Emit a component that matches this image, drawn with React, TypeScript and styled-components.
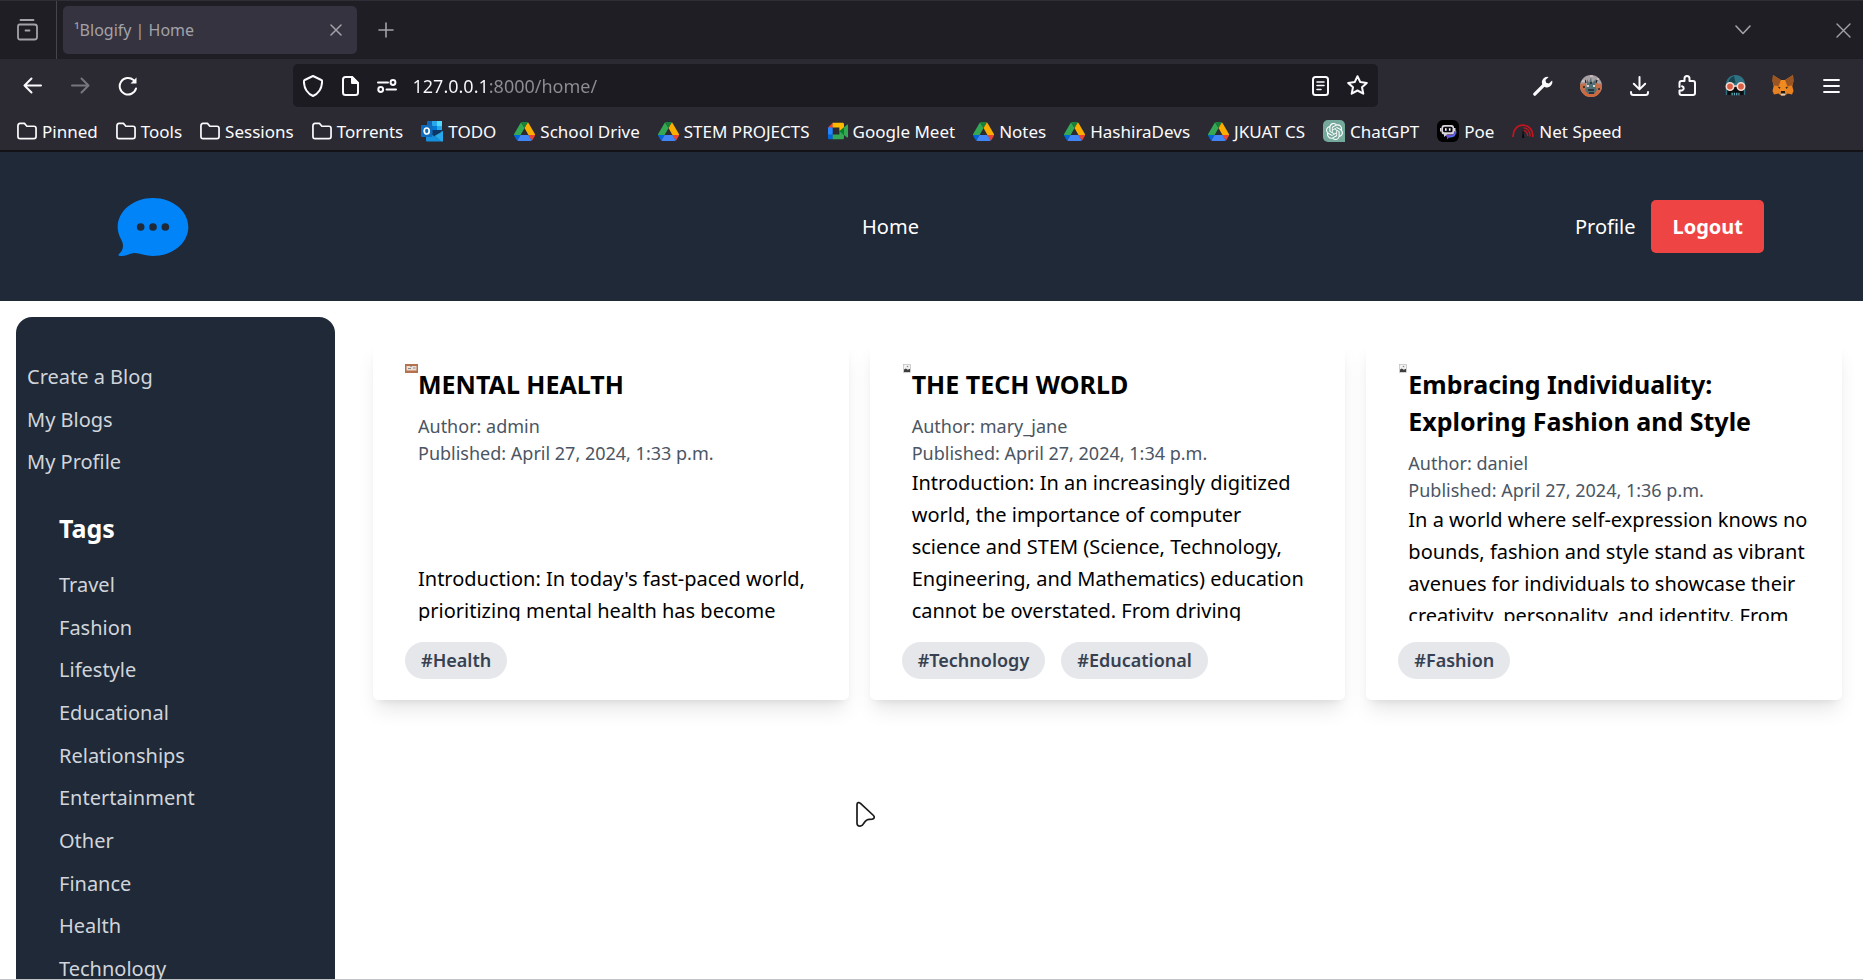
import React from 'react';
import styled, { createGlobalStyle } from 'styled-components';
import { SiOpenai } from 'react-icons/si';

const GlobalStyle = createGlobalStyle`
  *, *::before, *::after { box-sizing: border-box; }
  body {
    margin: 0;
    background: #ffffff;
    color: #000000;
    font-family: "Noto Sans", "Open Sans", sans-serif;
  }
  h2, p, ul { margin: 0; padding: 0; }
  ul { list-style: none; }
  a { color: inherit; text-decoration: none; }
  button { border: 0; padding: 0; margin: 0; background: none; color: inherit; font: inherit; cursor: pointer; }
  svg { display: block; flex: none; }
`;

/* ---------- browser window ---------- */

const Window = styled.div`
  display: flex;
  flex-direction: column;
  height: 100vh;
  overflow: hidden;
  border-bottom: 1px solid #c2c3c7;
`;

const TabStrip = styled.div`
  display: flex;
  align-items: center;
  flex: none;
  height: 59px;
  border-top: 1px solid #2f2e36;
  background: #1f1e25;
  color: #a3a2a8;
`;

const StripButton = styled.button<{ $width: number; $divider?: boolean }>`
  display: flex;
  align-items: center;
  justify-content: center;
  align-self: stretch;
  width: ${p => p.$width}px;
  border-right: ${p => (p.$divider ? '1px solid #46454d' : '0')};
`;

const Tab = styled.div`
  display: flex;
  align-items: center;
  justify-content: space-between;
  width: 294px;
  height: 48px;
  margin: 0 5px 0 6px;
  padding: 0 4px 0 11px;
  border-radius: 5px;
  background: #35333f;
  font-size: 16px;
`;

const Spacer = styled.div`
  flex: 10;
`;

const WindowControls = styled.div`
  display: flex;
  align-self: stretch;
  gap: 60px;
`;

const NavBar = styled.div`
  display: flex;
  align-items: center;
  flex: none;
  padding: 5px 8px;
  background: #2b2a33;
  color: #fbfbfe;
`;

const ToolButton = styled.button`
  display: flex;
  align-items: center;
  justify-content: center;
  width: 48px;
  height: 43px;

  &:disabled { color: #77767d; }
`;

const UrlBar = styled.div`
  display: flex;
  flex: 77;
  align-items: center;
  height: 43px;
  padding: 0 2px;
  border-radius: 5px;
  background: #1c1b22;
`;

const UrlButton = styled.button`
  display: flex;
  align-items: center;
  justify-content: center;
  width: 37px;
  height: 37px;
`;

/* The host part is bright and the rest of the address is dimmed. */
const UrlInput = styled.input`
  flex: 1;
  min-width: 0;
  padding: 0 0 0 7px;
  border: 0;
  outline: 0;
  font: 18px/26px "Noto Sans", sans-serif;
  color: transparent;
  caret-color: #fbfbfe;
  background: linear-gradient(90deg, #fbfbfe 83px, #8f8e94 83px);
  background-clip: text;
  -webkit-background-clip: text;
`;

const BookmarkBar = styled.nav`
  display: flex;
  align-items: center;
  flex: none;
  gap: 18px;
  height: 40px;
  padding: 0 17px;
  border-bottom: 2px solid #121217;
  background: #2b2a33;
  color: #fbfbfe;
  font-size: 17px;
  white-space: nowrap;
`;

const Bookmark = styled.a`
  display: flex;
  align-items: center;
  gap: 5px;
`;

/* ---------- page ---------- */

const SiteHeader = styled.header`
  display: flex;
  align-items: center;
  justify-content: space-between;
  flex: none;
  padding: 21px 99px;
  background: #1f2937;
  color: #ffffff;
  font-size: 20px;
`;

const Account = styled.div`
  display: flex;
  align-items: center;
  gap: 16px;
`;

const Logout = styled.button`
  height: 53px;
  padding: 0 21px;
  border-radius: 5px;
  background: #ef4444;
  font-weight: 700;
`;

const Main = styled.main`
  display: flex;
  align-items: flex-start;
  flex: 1;
  min-height: 0;
  padding: 16px 21px 0 16px;
  gap: 38px;
`;

const Sidebar = styled.aside`
  flex: none;
  width: 319px;
  padding: 44px 11px;
  border-radius: 16px;
  background: #1f2937;
  color: #d1d5db;
  font-size: 20px;
  line-height: 32px;
`;

const LinkList = styled.ul<{ $height: number }>`
  display: flex;
  flex-direction: column;
  justify-content: space-between;
  height: ${p => p.$height}px;
`;

const TagSection = styled.section`
  padding: 32px;
`;

const TagHeading = styled.h2`
  margin-bottom: 22px;
  color: #ffffff;
  font-size: 25px;
  font-weight: 700;
  line-height: 37px;
`;

const Cards = styled.div`
  display: grid;
  flex: 1;
  grid-template-columns: repeat(3, minmax(0, 1fr));
  gap: 21px;
  padding-top: 26px;
`;

const Card = styled.article`
  padding: 21px 21px 21px 32px;
  border-radius: 5px;
  background: #ffffff;
  box-shadow: 0 13px 20px -4px rgba(0, 0, 0, 0.1), 0 5px 8px -5px rgba(0, 0, 0, 0.1);
`;

const Excerpt = styled.div`
  display: flex;
  align-items: flex-start;
  height: 257px;
  overflow: hidden;
`;

const ExcerptText = styled.div`
  padding-top: 2px;
`;

const CardTitle = styled.h2`
  margin-bottom: 10px;
  font-size: 25px;
  font-weight: 700;
  line-height: 37px;
`;

const Meta = styled.p`
  color: #4b5563;
  font-size: 18px;
  line-height: 27px;
`;

const Body = styled.p<{ $blankLines: number }>`
  padding-top: ${p => p.$blankLines * 32}px;
  font-size: 20px;
  line-height: 32px;
  white-space: pre-line;
`;

const Pills = styled.div`
  display: flex;
  gap: 16px;
  margin-top: 21px;
`;

const Pill = styled.a`
  padding: 5px 16px;
  border-radius: 19px;
  background: #e5e7eb;
  color: #374151;
  font-size: 18px;
  font-weight: 600;
  line-height: 27px;
`;

const Pointer = styled.svg`
  position: absolute;
  left: 855px;
  top: 801px;
`;

/* ---------- icons ---------- */

type LineProps = { w: number; h: number; box?: string; stroke?: number; children: React.ReactNode };

const Line = ({ w, h, box, stroke = 2, children }: LineProps) => (
  <svg width={w} height={h} viewBox={box ?? `0 0 ${w} ${h}`} fill="none" stroke="currentColor"
    strokeWidth={stroke} strokeLinecap="round" strokeLinejoin="round" aria-hidden="true">
    {children}
  </svg>
);

const FolderIcon = () => (
  <Line w={20} h={18} box="0 0 21 18" stroke={1.8}>
    <path d="M1 3.500C1 2 1.800 1 3.200 1h4.600l2.600 3h7.400c1.400 0 2.200 1 2.200 2.300v8.400c0 1.400-.8 2.300-2.200 2.300H3.200C1.800 17 1 16 1 14.700z" />
  </Line>
);

const DriveIcon = () => (
  <svg width="21" height="19" viewBox="0 0 87 78" aria-hidden="true">
    <path fill="#0066da" d="M6.600 66.850l3.850 6.650c.8 1.400 1.950 2.500 3.300 3.300L27.500 53H0c0 1.550.4 3.100 1.200 4.500z" />
    <path fill="#34a853" d="M43.650 25L29.900 1.200c-1.350.8-2.500 1.900-3.300 3.300L1.200 48.500A9 9 0 0 0 0 53h27.500z" />
    <path fill="#ea4335" d="M73.550 76.800c1.350-.8 2.500-1.900 3.300-3.300l1.600-2.750L86.100 57.500c.8-1.400 1.200-2.950 1.200-4.500H59.800l5.850 11.500z" />
    <path fill="#188038" d="M43.650 25L57.400 1.200C56.050.4 54.500 0 52.900 0H34.400c-1.600 0-3.150.45-4.500 1.200z" />
    <path fill="#4285f4" d="M59.800 53H27.500L13.750 76.800c1.350.8 2.900 1.200 4.500 1.200h50.800c1.600 0 3.150-.45 4.500-1.200z" />
    <path fill="#fbad00" d="M73.400 26.500L60.700 4.500c-.8-1.400-1.950-2.500-3.300-3.300L43.650 25 59.800 53h27.450c0-1.550-.4-3.100-1.200-4.500z" />
  </svg>
);

const MeetIcon = () => (
  <svg width="20" height="18" viewBox="0 0 87 72" aria-hidden="true">
    <path fill="#00832d" d="M49.500 36l8.500 9.750 11.500 7.300 2-17-2-16.600-11.700 6.450z" />
    <path fill="#0066da" d="M0 51.500V66c0 3.300 2.700 6 6 6h14.500l3-10.950-3-9.550-9.950-3z" />
    <path fill="#e94235" d="M20.500 0L0 20.500l10.550 3 9.950-3 2.950-9.400z" />
    <path fill="#2684fc" d="M0 20.500h20.500v31H0z" />
    <path fill="#34a853" d="M82.600 8.700L69.500 19.400v33.700l13.100 10.700c2 1.500 4.800.1 4.800-2.400V11.100c0-2.500-2.900-3.900-4.800-2.400zM49.500 36v15.500h-29V72h43c3.300 0 6-2.700 6-6V53.100z" />
    <path fill="#ffba00" d="M63.500 0h-43v20.500h29V36l20-16.600V6c0-3.300-2.700-6-6-6z" />
  </svg>
);

const OutlookIcon = () => (
  <svg width="22" height="21" viewBox="0 0 22 21" aria-hidden="true">
    <path fill="#1066b5" d="M6 0h15v11H6z" />
    <path fill="#28a8ea" d="M11 0h5v5h-5zM16 5h5v5h-5z" />
    <path fill="#50d9ff" d="M16 0h5v5h-5z" />
    <path fill="#0078d4" d="M11 5h5v5h-5z" />
    <path fill="#0a3767" d="M5 9h17l-8 6z" />
    <path fill="#1490df" d="M5 10l17 10.500H6.500C5.600 20.500 5 20 5 19z" />
    <path fill="#28a8ea" d="M22 10v9.500c0 .6-.4 1-1 1L13.500 15z" />
    <rect y="4" width="11.500" height="12" rx="1" fill="#0f6cbd" />
    <ellipse cx="5.700" cy="10" rx="2.500" ry="3" fill="none" stroke="#fff" strokeWidth="1.700" />
  </svg>
);

const ChatTile = styled.span`
  display: flex;
  align-items: center;
  justify-content: center;
  width: 22px;
  height: 22px;
  border-radius: 5px 5px 0 5px;
  background: #75a99b;
  color: #ffffff;
`;

const PoeIcon = () => (
  <svg width="22" height="22" viewBox="0 0 22 22" aria-hidden="true">
    <rect width="22" height="22" rx="6" fill="#000" />
    <path d="M8 15h7l3.500-4.500v3c0 2.500-1 3.500-3.300 3.500h-2.500L10 19.500V17z" fill="#6a48d8" />
    <path d="M12 17l3.500-.2 3.300-3.300v-2.800" stroke="#3b8be8" strokeWidth="1" fill="none" />
    <rect x="4.500" y="5" width="12.500" height="9.500" rx="2.500" fill="#d9d3da" />
    <path d="M3.800 8v3.500M17.700 8v3.500" stroke="#d9d3da" strokeWidth="1.600" />
    <rect x="6" y="6.800" width="9.500" height="5.400" rx="1.500" fill="#0b0a10" />
    <path d="M8.800 8.300v2.400M12.700 8.300v2.400" stroke="#fff" strokeWidth="1.600" />
    <path d="M7 14v3l3.500-3z" fill="#d9d3da" />
  </svg>
);

const SpeedIcon = () => (
  <svg width="22" height="14" viewBox="0 0 22 14" fill="none" aria-hidden="true">
    <path d="M1.200 13C.5 6.500 5 1.200 11 1.200S21.500 6.500 20.800 13" stroke="#c4151f" strokeWidth="1.700" />
    <path d="M11.500 3.800c4 .2 6.500 3.700 6.700 8.700M11.500 6.300c2.500.5 4 2.800 4.200 5.700" stroke="#c4151f" strokeWidth="1.300" />
    <path d="M10 14l1-9.500L12.300 14z" fill="#09090c" />
  </svg>
);

const AvatarIcon = () => (
  <svg width="22" height="22" viewBox="0 0 22 22" aria-hidden="true">
    <clipPath id="avatar-clip"><circle cx="11" cy="11" r="11" /></clipPath>
    <g clipPath="url(#avatar-clip)">
      <rect width="22" height="22" fill="#a9a0a3" />
      <path d="M0 9l6-1 1 14H0zM15 8l7 1v13h-7z" fill="#c26f4a" />
      <path d="M4 16l7-3 8 4v5H3z" fill="#d0683e" />
      <path d="M7 4l2 4 2-6 1 6 4-4-1 7 2 4-3 4H8l-3-4 2-4z" fill="#4f6f75" />
      <path d="M7 10h2v2H7zM13 10h2v2h-2z" fill="#d8d2cd" />
      <path d="M8 15h6M5 5l1 3M17 5l-1 3M10 8h2M3 12h2M18 14h2M9 18h5" stroke="#1f2429" strokeWidth="1.300" />
      <path d="M2 6h3M10 1h3M17 4h2" stroke="#cfc6cc" strokeWidth="1.300" />
    </g>
  </svg>
);

const SkullIcon = () => (
  <svg width="21" height="21" viewBox="0 0 21 21" aria-hidden="true">
    <path d="M1 12C0 5 4 0 10.500 0S21 5 20 12z" fill="#2d7183" />
    <path d="M3.500 8C4 4 6 2 9 1l1.500 7zM11.500 8l1-5" fill="#16444f" />
    <path d="M2 12h17v8H2z" fill="#0b0d10" />
    <path d="M1.500 13v7M19.500 13v7" stroke="#2d7183" strokeWidth="1.400" />
    <path d="M6.500 19h8" stroke="#5fb2c2" strokeWidth="2.400" strokeDasharray="1.300 1" />
    <circle cx="5" cy="11.500" r="3.700" fill="#d95f45" stroke="#f4dcd2" strokeWidth="1.600" />
    <circle cx="16" cy="11.500" r="3.700" fill="#d95f45" stroke="#f4dcd2" strokeWidth="1.600" />
    <path d="M9 11h3" stroke="#f4dcd2" strokeWidth="1.400" />
  </svg>
);

const FoxIcon = () => (
  <svg width="22" height="21" viewBox="0 0 22 21" aria-hidden="true">
    <path d="M1 0l8 5h4l8-5 .5 6-1.200 5 1.200 5-1.500 3.500-4.500-1L13 20.500H9L6.500 18.500l-4.500 1L.5 16l1.200-5L.5 6z" fill="#e8811f" />
    <path d="M1 0l8 5-2.500 6-4.800-.5L.5 6zM21 0l-8 5 2.500 6 4.800-.5L21.500 6z" fill="#9a5522" />
    <path d="M9 5h4l1.500 9-1 3.500h-5l-1-3.500z" fill="#f08b22" />
    <path d="M5.500 11.500l3 .8-.8 1.700zM16.500 11.500l-3 .8.8 1.700z" fill="#33291f" />
    <path d="M8.500 17l.7 3.500h3.600l.7-3.500z" fill="#d9d0c5" />
    <path d="M9 16h4l.4 2.500H8.600z" fill="#1d1712" />
  </svg>
);

const WrenchIcon = () => (
  <svg width="20" height="20" viewBox="0 0 20 20" fill="none" aria-hidden="true">
    <path d="M1.800 18.200l9-9" stroke="#fbfbfe" strokeWidth="3.200" strokeLinecap="round" />
    <path d="M15.600 1a5.400 5.400 0 0 0-6.300 7.300 5.200 5.200 0 0 0 2.500 2.600 5.300 5.300 0 0 0 7.300-6.400l-3.200 2.900-2.800-.7-.6-2.700z" fill="#fbfbfe" />
  </svg>
);

const BrokenImage = () => (
  <svg width="10" height="9" viewBox="-1 0 10 9" role="img" aria-label="Blog picture">
    <rect x=".5" y=".5" width="7" height="8" fill="#f1f1f1" stroke="#b5b5b5" strokeWidth=".6" />
    <path d="M1 5.500l1.800-1 2 1.200L7 4.800V8H1z" fill="#3f3f3f" />
    <circle cx="4.500" cy="2.500" r=".8" fill="#8a8a8a" />
  </svg>
);

const HealthImage = () => (
  <svg width="13" height="9" viewBox="0 0 13 9" role="img" aria-label="Blog picture">
    <rect width="13" height="9" fill="#b5714d" />
    <rect x="1.500" y="2" width="10" height="4.500" fill="#ecdfd3" />
    <path d="M5 2.200h2M3 4.500h3M8 4h2.500" stroke="#6e7480" strokeWidth=".8" />
  </svg>
);

const LogoIcon = () => (
  <svg width="107" height="107" viewBox="-54 -74 321 321" role="img" aria-label="Blogify">
    <path fill="#0084f8" d="M108 1C167 1 214 40 214 88S167 175 108 175C85 175 68 166 53 166S32 175 15 175C8 175 4 174 4 171C14 163 18 155 18 143C18 128 2 115 2 88C2 40 49 1 108 1Z" />
    <g fill="#1f2937">
      <circle cx="71" cy="88" r="11.500" />
      <circle cx="108" cy="88" r="11.500" />
      <circle cx="145" cy="88" r="11.500" />
    </g>
  </svg>
);

/* ---------- data ---------- */

const bookmarks: { label: string; icon: React.ReactNode }[] = [
  { label: 'Pinned', icon: <FolderIcon /> },
  { label: 'Tools', icon: <FolderIcon /> },
  { label: 'Sessions', icon: <FolderIcon /> },
  { label: 'Torrents', icon: <FolderIcon /> },
  { label: 'TODO', icon: <OutlookIcon /> },
  { label: 'School Drive', icon: <DriveIcon /> },
  { label: 'STEM PROJECTS', icon: <DriveIcon /> },
  { label: 'Google Meet', icon: <MeetIcon /> },
  { label: 'Notes', icon: <DriveIcon /> },
  { label: 'HashiraDevs', icon: <DriveIcon /> },
  { label: 'JKUAT CS', icon: <DriveIcon /> },
  { label: 'ChatGPT', icon: <ChatTile><SiOpenai size={17} /></ChatTile> },
  { label: 'Poe', icon: <PoeIcon /> },
  { label: 'Net Speed', icon: <SpeedIcon /> },
];

const menu = ['Create a Blog', 'My Blogs', 'My Profile'];

const tags = [
  'Travel', 'Fashion', 'Lifestyle', 'Educational', 'Relationships',
  'Entertainment', 'Other', 'Finance', 'Health', 'Technology',
];

const posts = [
  {
    title: 'MENTAL HEALTH',
    author: 'admin',
    time: '1:33 p.m.',
    image: <HealthImage />,
    blankLines: 3,
    body: "Introduction: In today's fast-paced world,\nprioritizing mental health has become",
    tags: ['Health'],
  },
  {
    title: 'THE TECH WORLD',
    author: 'mary_jane',
    time: '1:34 p.m.',
    image: <BrokenImage />,
    blankLines: 0,
    body: 'Introduction: In an increasingly digitized\nworld, the importance of computer\nscience and STEM (Science, Technology,\nEngineering, and Mathematics) education\ncannot be overstated. From driving',
    tags: ['Technology', 'Educational'],
  },
  {
    title: 'Embracing Individuality: Exploring Fashion and Style',
    author: 'daniel',
    time: '1:36 p.m.',
    image: <BrokenImage />,
    blankLines: 0,
    body: 'In a world where self-expression knows no\nbounds, fashion and style stand as vibrant\navenues for individuals to showcase their\ncreativity, personality, and identity. From',
    tags: ['Fashion'],
  },
];

export default function App() {
  return (
    <Window>
      <GlobalStyle />

      <TabStrip>
        <StripButton $width={57} $divider aria-label="Recent browsing">
          <Line w={22} h={22} box="1 0 22 22" stroke={1.8}>
            <path d="M4.500 1h13M3.500 5.500h15c1.500 0 2.500 1 2.500 2.500v10c0 1.500-1 2.500-2.500 2.500h-15C2.500 20.500 2 19.500 2 18V8c0-1.500.5-2.500 1.500-2.500zM9.500 11.500h4" />
          </Line>
        </StripButton>
        <Tab>
          <span>¹Blogify | Home</span>
          <StripButton $width={34} aria-label="Close tab">
            <Line w={12} h={12} stroke={1.5}><path d="M1 1l10 10M11 1L1 11" /></Line>
          </StripButton>
        </Tab>
        <StripButton $width={48} aria-label="New tab">
          <Line w={16} h={16} stroke={1.6}><path d="M8 1v14M1 8h14" /></Line>
        </StripButton>
        <Spacer />
        <WindowControls>
          <StripButton $width={40} aria-label="List all tabs">
            <Line w={16} h={10} stroke={1.6}><path d="M1 1l7 7.500L15 1" /></Line>
          </StripButton>
          <StripButton $width={40} aria-label="Close window">
            <Line w={15} h={15} stroke={1.4}><path d="M1 1l13 13M14 1L1 14" /></Line>
          </StripButton>
        </WindowControls>
      </TabStrip>

      <NavBar>
        <ToolButton aria-label="Back">
          <Line w={19} h={17}><path d="M18 8.500H1.500M8.500 1.500l-7 7 7 7" /></Line>
        </ToolButton>
        <ToolButton aria-label="Forward" disabled>
          <Line w={19} h={17}><path d="M1 8.500h16.500M10.500 1.500l7 7-7 7" /></Line>
        </ToolButton>
        <ToolButton aria-label="Reload">
          <Line w={20} h={20}>
            <path d="M18 12.500A8.300 8.300 0 1 1 15.500 4" />
            <path d="M18.500 1.500v6h-6z" fill="currentColor" stroke="none" />
          </Line>
        </ToolButton>
        <Spacer />
        <UrlBar>
          <UrlButton aria-label="Tracking protection">
            <Line w={20} h={22}><path d="M10 1l8.300 4c.7.300.9.900.8 1.700-.2 6-3 11.500-9.100 14.300C3.900 18.200 1.100 12.700.9 6.700.9 5.900 1.100 5.300 1.700 5z" /></Line>
          </UrlButton>
          <UrlButton aria-label="Site information">
            <Line w={17} h={20}>
              <path d="M3.500 1H10l6 6v9.500c0 1.500-1 2.500-2.500 2.500h-10C2 19 1 18 1 16.500v-13C1 2 2 1 3.500 1z" />
              <path d="M10 1l6 6h-6z" fill="currentColor" />
            </Line>
          </UrlButton>
          <UrlButton aria-label="Permissions">
            <Line w={20} h={14}>
              <path d="M1 3.500h10M9.500 10.500H19" />
              <circle cx="16" cy="3.500" r="2.400" />
              <circle cx="3.700" cy="10.500" r="2.400" />
            </Line>
          </UrlButton>
          <UrlInput aria-label="Address" defaultValue="127.0.0.1:8000/home/" />
          <UrlButton aria-label="Reader view">
            <Line w={17} h={20}>
              <rect x="1" y="1" width="15" height="18" rx="2.500" />
              <path d="M5 6h7M5 9.500h7M5 13.500h4" stroke="currentColor" strokeWidth={1.6} />
            </Line>
          </UrlButton>
          <UrlButton aria-label="Bookmark this page">
            <Line w={21} h={21}>
              <path d="M10.500 1.200l2.800 5.900 6.500.8-4.800 4.400 1.300 6.400-5.800-3.200-5.800 3.200L6 12.300 1.200 7.900l6.500-.8z" />
            </Line>
          </UrlButton>
        </UrlBar>
        <Spacer />
        <ToolButton aria-label="Developer tools"><WrenchIcon /></ToolButton>
        <ToolButton aria-label="Account"><AvatarIcon /></ToolButton>
        <ToolButton aria-label="Downloads">
          <Line w={19} h={20}><path d="M9.500 1v12M3.800 7.700l5.700 5.700 5.700-5.700M1 16v.5C1 18 2 19 3.500 19h12c1.500 0 2.500-1 2.500-2.500V16" /></Line>
        </ToolButton>
        <ToolButton aria-label="Extensions">
          <Line w={18} h={21}>
            <path d="M1.500 12V8c0-1.500.5-2 2-2h3V3.500C6.500 2 7.500 1 9 1s2.500 1 2.500 2.500V6h3.500c1.300 0 2 .7 2 2v10c0 1.300-.7 2-2 2H3.500c-1.300 0-2-.7-2-2v-2.500H4a2.200 2.200 0 0 0 0-4.300" />
          </Line>
        </ToolButton>
        <ToolButton aria-label="Skull extension"><SkullIcon /></ToolButton>
        <ToolButton aria-label="MetaMask"><FoxIcon /></ToolButton>
        <ToolButton aria-label="Application menu">
          <Line w={17} h={14} stroke={1.8}><path d="M1 1h15M1 7h15M1 13h15" /></Line>
        </ToolButton>
      </NavBar>

      <BookmarkBar aria-label="Bookmarks">
        {bookmarks.map(b => (
          <Bookmark key={b.label} href="#">{b.icon}{b.label}</Bookmark>
        ))}
      </BookmarkBar>

      <SiteHeader>
        <a href="#"><LogoIcon /></a>
        <a href="#">Home</a>
        <Account>
          <a href="#">Profile</a>
          <Logout>Logout</Logout>
        </Account>
      </SiteHeader>

      <Main>
        <Sidebar>
          <LinkList $height={117}>
            {menu.map(m => <li key={m}><a href="#">{m}</a></li>)}
          </LinkList>
          <TagSection>
            <TagHeading>Tags</TagHeading>
            <LinkList $height={416}>
              {tags.map(t => <li key={t}><a href="#">{t}</a></li>)}
            </LinkList>
          </TagSection>
        </Sidebar>

        <Cards>
          {posts.map(p => (
            <Card key={p.title}>
              <Excerpt>
                {p.image}
                <ExcerptText>
                  <CardTitle>{p.title}</CardTitle>
                  <Meta>Author: {p.author}</Meta>
                  <Meta>Published: April 27, 2024, {p.time}</Meta>
                  <Body $blankLines={p.blankLines}>{p.body}</Body>
                </ExcerptText>
              </Excerpt>
              <Pills>
                {p.tags.map(t => <Pill key={t} href="#">#{t}</Pill>)}
              </Pills>
            </Card>
          ))}
        </Cards>
      </Main>

      <Pointer width="21" height="27" viewBox="0 0 21 27" aria-hidden="true">
        <path d="M2 3.500C2 1.500 4 1 5.200 2.200L18.500 14.500c1.500 1.500.6 3.500-1.300 3.600-4 .1-6.200.4-8.400 4.200-.8 1.500-1.500 2.900-3.700 2.900C3 25.200 2 24 2 22z"
          fill="#fff" stroke="#1a1a1d" strokeWidth="1.700" strokeLinejoin="round" />
      </Pointer>
    </Window>
  );
}
